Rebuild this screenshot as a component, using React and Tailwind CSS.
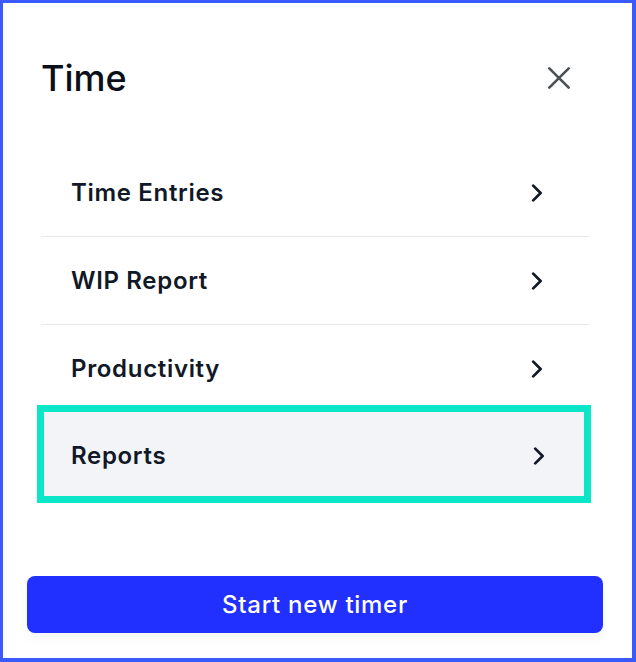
import React from "react";

function Chevron() {
  return (
    <svg width="12" height="18" viewBox="0 0 12 18" fill="none" className="shrink-0">
      <path d="M2.2 1.6 L9.6 9 L2.2 16.4" stroke="#111827" strokeWidth="2.7" strokeLinecap="round" strokeLinejoin="round" />
    </svg>
  );
}

function Row({ label, last }) {
  return (
    <div className={"flex items-center justify-between h-[88px] pl-[30px] pr-[46px] " + (last ? "" : "border-b border-[#e5e7eb]")}>
      <span className="text-[24px] leading-[30px] font-semibold tracking-[0.028em] text-[#111827]">{label}</span>
      <Chevron />
    </div>
  );
}

export default function App() {
  return (
    <div
      className="w-[636px] h-[662px] bg-white border-[3px] border-r-[4px] border-b-[4px] border-[#3a5afe] flex flex-col"
      style={{ fontFamily: "Inter, 'Noto Sans', sans-serif" }}
    >
      <div className="flex items-center justify-between mt-[53px] pl-[38px] pr-[61px] h-[44px]">
        <h1 className="text-[36px] leading-[44px] font-[550] text-[#0b0f19]">Time</h1>
        <svg width="24" height="24" viewBox="0 0 24 24" fill="none">
          <path d="M2.3 2.3 L21.7 21.7 M21.7 2.3 L2.3 21.7" stroke="#4b5055" strokeWidth="2.6" strokeLinecap="round" />
        </svg>
      </div>
      <div className="mt-[49px] ml-[38px] w-[548px] flex flex-col">
        <Row label="Time Entries" />
        <Row label="WIP Report" />
        <Row label="Productivity" last />
        <div className="mt-[-8px] ml-[-4px] mr-[-2px] h-[98px] border-[7px] border-[#0ce6c8] bg-[#f3f4f7] flex items-center justify-between pl-[27px] pr-[39px] pt-[4px]">
          <span className="text-[24px] leading-[30px] font-semibold tracking-[0.028em] text-[#111827]">Reports</span>
          <Chevron />
        </div>
      </div>
      <div className="mt-[73px] ml-[24px] w-[576px] h-[57px] rounded-[8px] bg-[#2130ff] flex items-center justify-center shadow-[0_6px_10px_rgba(0,0,0,0.04)]">
        <span className="text-[24px] font-medium tracking-[0.03em] text-white">Start new timer</span>
      </div>
    </div>
  );
}
